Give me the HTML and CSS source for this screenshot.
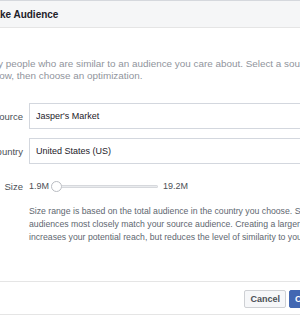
FILE: index.html
```html
<!DOCTYPE html>
<html lang="en">
<head>
<meta charset="utf-8">
<title>Make Audience</title>
<link rel="stylesheet" href="styles.css">
</head>
<body>
<div class="dialog">
  <div class="header">
    <h1 class="title">Make Audience</h1>
  </div>
  <div class="body">
    <p class="intro">Any people who are similar to an audience you care about. Select a source<br>below, then choose an optimization.</p>
    <div class="form">
      <div class="row">
        <label class="label" for="source">Source</label>
        <input class="field" id="source" type="text" value="Jasper's Market">
      </div>
      <div class="row">
        <label class="label" for="country">Country</label>
        <input class="field" id="country" type="text" value="United States (US)">
      </div>
      <div class="row">
        <span class="label">Size</span>
        <div class="size">
          <span class="size-value">1.9M</span>
          <div class="slider"><span class="knob"></span><span class="track"></span></div>
          <span class="size-value">19.2M</span>
        </div>
      </div>
    </div>
    <p class="help">Size range is based on the total audience in the country you choose. Smaller<br>audiences most closely match your source audience. Creating a larger audience<br>increases your potential reach, but reduces the level of similarity to your source audience.</p>
  </div>
  <div class="footer">
    <button class="btn btn-cancel" type="button">Cancel</button>
    <button class="btn btn-primary" type="button">Create</button>
  </div>
</div>
</body>
</html>
```

FILE: styles.css
```css
html, body {
  margin: 0;
  padding: 0;
}

body {
  width: 300px;
  height: 316px;
  overflow: hidden;
  background: #ffffff;
  font-family: "Liberation Sans", Arial, sans-serif;
}

.dialog {
  margin-left: -24px;
  width: 363px;
  background: #ffffff;
}

.header {
  height: 26px;
  padding: 0 10px;
  display: flex;
  align-items: center;
  background: #f5f6f7;
  border-top: 1px solid #d5d8dd;
  border-bottom: 1px solid #e5e5e5;
}

.title {
  margin: 0;
  font-size: 10px;
  font-weight: bold;
  color: #1d2129;
}

.body {
  height: 253px;
  box-sizing: border-box;
  padding: 30px 10px 0;
}

.intro {
  margin: 0;
  font-size: 9.9px;
  line-height: 12px;
  color: #90949c;
  white-space: nowrap;
}

.form {
  margin-top: 21px;
  display: flex;
  flex-direction: column;
  gap: 9px;
}

.row {
  height: 26px;
  display: flex;
  align-items: center;
  gap: 6px;
}

.label {
  flex: none;
  width: 37px;
  text-align: right;
  font-size: 9.5px;
  color: #4b4f56;
}

.field {
  flex: 1;
  min-width: 0;
  height: 26px;
  box-sizing: border-box;
  margin: 0;
  padding: 0 6px;
  border: 1px solid #d3d7de;
  border-radius: 0;
  font-family: "Liberation Sans", Arial, sans-serif;
  font-size: 9px;
  color: #1d2129;
  background: #ffffff;
  outline: none;
}

.size {
  display: flex;
  align-items: center;
  font-size: 9px;
  color: #4b4f56;
}

.slider {
  width: 107px;
  margin: 0 5px 0 2px;
  display: flex;
  align-items: center;
}

.knob {
  flex: none;
  width: 11px;
  height: 11px;
  box-sizing: border-box;
  border: 1px solid #b9bcc2;
  border-radius: 50%;
  background: #ffffff;
}

.track {
  flex: 1;
  height: 3px;
  box-sizing: border-box;
  border: 1px solid #d6d8dc;
  border-left: none;
  border-radius: 0 2px 2px 0;
  background: #e9ebee;
}

.help {
  margin: 6px 0 0 43px;
  font-size: 8.7px;
  line-height: 13px;
  color: #606770;
  white-space: nowrap;
}

.footer {
  padding: 8px 10px 6px;
  display: flex;
  justify-content: flex-end;
  gap: 3px;
  border-top: 1px solid #e5e5e5;
  border-bottom: 1px solid #e5e5e5;
}

.btn {
  height: 18px;
  margin: 0;
  padding: 0 5px;
  border-radius: 2px;
  font-family: "Liberation Sans", Arial, sans-serif;
  font-size: 9px;
  font-weight: bold;
  line-height: 16px;
}

.btn-cancel {
  background: #f6f7f9;
  border: 1px solid #ced0d4;
  color: #4b4f56;
}

.btn-primary {
  background: #4267b2;
  border: 1px solid #4267b2;
  color: #ffffff;
}
```
